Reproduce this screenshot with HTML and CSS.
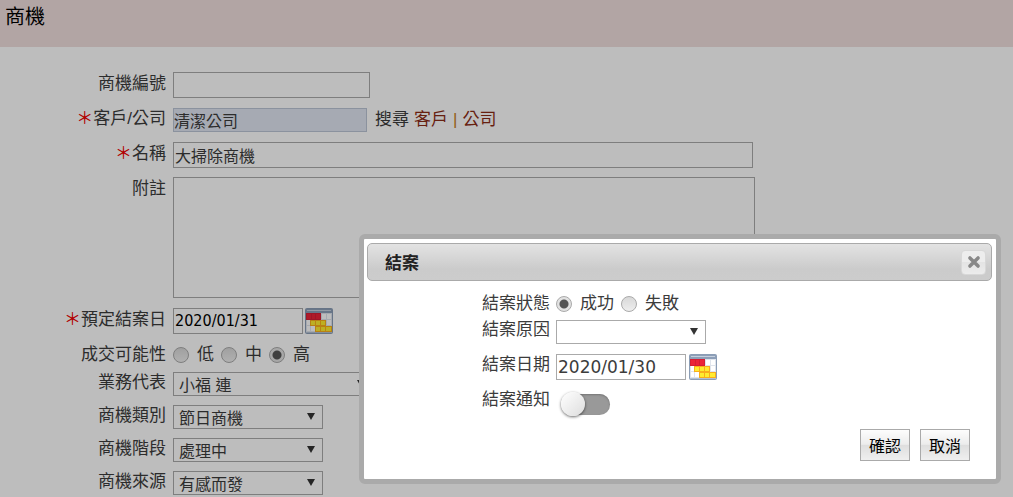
FILE: index.html
```html
<!DOCTYPE html>
<html lang="zh-Hant">
<head>
    <meta charset="UTF-8">
    <meta name="viewport" content="width=device-width, initial-scale=1.0">
    <title>商機</title>
    <link rel="stylesheet" href="styles.css">
</head>
<body>

    <!-- Calendar icon shared by the date fields -->
    <svg class="defs" width="0" height="0" aria-hidden="true">
        <symbol id="calendar" viewBox="0 0 28 26">
            <rect x="0.5" y="0.5" width="27" height="25" rx="1" fill="#b4c2d3" stroke="#8b9db5"/>
            <rect x="1" y="1" width="26" height="4" fill="#8d9fb8"/>
            <rect x="2" y="2" width="24" height="1" fill="#c5d0de"/>
            <rect x="1" y="5" width="26" height="19" fill="#dfe4ec"/>
            <path fill="#fff" d="M17 6h4v5h-4zM22 6h4v5h-4zM2 12h3v5H2zM22 12h4v5h-4zM2 18h3v5H2zM6 18h4v5H6z"/>
            <path fill="#d51f35" d="M1 5h15v7H1z"/>
            <path fill="#ec2438" d="M2 6h4v5H2zM7 6h3v5H7zM11 6h4v5h-4z"/>
            <path fill="#f9ae1c" d="M5 12h16v6h6v6H10v-6H5z"/>
            <path fill="#ffec30" d="M6 13h4v4H6zM11 13h4v4h-4zM16 13h4v4h-4zM11 19h4v4h-4zM16 19h4v4h-4zM21 19h5v4h-5z"/>
        </symbol>
    </svg>

    <header class="page-header">
        <h1>商機</h1>
    </header>

    <!-- Opportunity form -->
    <form class="form">
        <div class="field">
            <label class="field-label" for="oppNo">商機編號</label>
            <input class="text-box no-box" type="text" id="oppNo">
        </div>
        <div class="field">
            <label class="field-label" for="client"><span class="required">＊</span>客戶/公司</label>
            <input class="text-box client-box" type="text" id="client" value="清潔公司" readonly>
            <div class="search">搜尋 <a href="#">客戶</a> <span class="bar">|</span> <a href="#">公司</a></div>
        </div>
        <div class="field">
            <label class="field-label" for="name"><span class="required">＊</span>名稱</label>
            <input class="text-box name-box" type="text" id="name" value="大掃除商機">
        </div>
        <div class="field field-note">
            <label class="field-label" for="note">附註</label>
            <textarea class="note-box" id="note"></textarea>
        </div>
        <div class="field">
            <label class="field-label" for="dueDate"><span class="required">＊</span>預定結案日</label>
            <input class="text-box date-box" type="text" id="dueDate" value="2020/01/31">
            <button class="calendar-btn" type="button" aria-label="選擇日期"><svg><use href="#calendar"/></svg></button>
        </div>
        <div class="field field-radio" role="radiogroup" aria-labelledby="chanceLabel">
            <span class="field-label" id="chanceLabel">成交可能性</span>
            <div class="radios">
                <label><input type="radio" name="chance">低</label>
                <label><input type="radio" name="chance">中</label>
                <label><input type="radio" name="chance" checked>高</label>
            </div>
        </div>
        <div class="field field-select">
            <label class="field-label" for="sales">業務代表</label>
            <div class="select wide"><select id="sales"><option>小福 連</option></select></div>
        </div>
        <div class="field field-select">
            <label class="field-label" for="category">商機類別</label>
            <div class="select"><select id="category"><option>節日商機</option></select></div>
        </div>
        <div class="field field-select">
            <label class="field-label" for="stage">商機階段</label>
            <div class="select"><select id="stage"><option>處理中</option></select></div>
        </div>
        <div class="field field-select">
            <label class="field-label" for="source">商機來源</label>
            <div class="select"><select id="source"><option>有感而發</option></select></div>
        </div>
    </form>

    <div class="overlay"></div>

    <!-- Close-case dialog -->
    <div class="dialog" role="dialog" aria-labelledby="dialogTitle">
        <div class="dialog-title">
            <h2 id="dialogTitle">結案</h2>
            <button class="close-btn" type="button" aria-label="關閉">
                <svg viewBox="0 0 12 12"><path d="M2.5 2.5l7 7M9.5 2.5l-7 7"/></svg>
            </button>
        </div>
        <form class="dialog-form">
            <div class="field field-status" role="radiogroup" aria-labelledby="statusLabel">
                <span class="field-label" id="statusLabel">結案狀態</span>
                <div class="radios">
                    <label><input type="radio" name="status" checked>成功</label>
                    <label><input type="radio" name="status">失敗</label>
                </div>
            </div>
            <div class="field">
                <label class="field-label" for="reason">結案原因</label>
                <div class="select"><select id="reason"><option></option></select></div>
            </div>
            <div class="field">
                <label class="field-label" for="closeDate">結案日期</label>
                <input class="text-box date-box" type="text" id="closeDate" value="2020/01/30">
                <button class="calendar-btn" type="button" aria-label="選擇日期"><svg><use href="#calendar"/></svg></button>
            </div>
            <div class="field">
                <label class="field-label" for="notify">結案通知</label>
                <input class="toggle" type="checkbox" id="notify">
            </div>
            <div class="dialog-buttons">
                <button class="btn" type="submit">確認</button>
                <button class="btn" type="button">取消</button>
            </div>
        </form>
    </div>

</body>
</html>
```

FILE: styles.css
```css
* {
    box-sizing: border-box;
}

body {
    margin: 0;
    height: 100vh;
    overflow: hidden;
    background-color: #fff;
    color: #3c3c3c;
    font-family: "Liberation Sans", "Noto Sans CJK TC", sans-serif;
    font-size: 17px;
    line-height: 24px;
}

.defs {
    position: absolute;
}

input, select, textarea, button {
    margin: 0;
    font-family: inherit;
    color: inherit;
}

.page-header {
    height: 47px;
    padding: 5px;
    background-color: #f0dfde;
}

h1 {
    margin: 0;
    color: #000;
    font-size: 20px;
    font-weight: normal;
    line-height: 24px;
}

/* Form rows */
.form {
    padding-top: 24px;
}

.field {
    display: flex;
    align-items: flex-start;
    min-height: 35px;
}

.field-label {
    flex: none;
    width: 166px;
    margin-right: 7px;
    padding-top: 1px;
    text-align: right;
    white-space: nowrap;
}

.required {
    color: #f00000;
}

.field-note {
    min-height: 131px;
}

.field-radio {
    min-height: 28px;
}

.field-select {
    min-height: 33px;
}

.field-radio, .field-status, .field-select {
    line-height: 24px;
}

.text-box, .note-box, .select select {
    border: 1px solid #aaa;
    border-radius: 0;
    background-color: #fff;
    font-size: 16px;
}

.text-box {
    height: 26px;
    margin-top: 1px;
    padding: 0 1px 1px;
}

.no-box {
    width: 197px;
}

.client-box {
    width: 194px;
    height: 24px;
    margin-top: 2px;
    padding: 0;
    border-color: #bcc5d6;
    background-color: #e0e6f2;
}

.name-box {
    width: 580px;
}

.note-box {
    width: 582px;
    height: 121px;
    margin-top: 1px;
    resize: none;
}

.date-box {
    width: 130px;
    color: #000;
    font-family: "DejaVu Sans Condensed", "Noto Sans", sans-serif;
}

.search {
    display: flex;
    gap: 5px;
    margin-left: 8px;
    padding-top: 2px;
}

.search a {
    color: #8c2c16;
    text-decoration: none;
}

.bar {
    color: #c87f1e;
}

.calendar-btn {
    width: 28px;
    height: 26px;
    margin: 1px 0 0 2px;
    padding: 0;
    border: 0;
    background: none;
}

.calendar-btn svg {
    display: block;
    width: 28px;
    height: 26px;
}

/* Radios */
.radios {
    display: flex;
    gap: 7px;
    padding-top: 1px;
}

.radios label {
    display: flex;
    align-items: center;
    gap: 8px;
}

.radios input {
    appearance: none;
    width: 16px;
    height: 16px;
    border: 1px solid #aaa;
    border-radius: 50%;
    background: linear-gradient(#d8d8d8, #eee);
}

.radios input:checked {
    background: radial-gradient(circle, #555 0 4px, #e2e2e2 5px);
}

/* Drop-downs */
.select {
    position: relative;
    width: 150px;
    margin-top: 2px;
}

.select.wide {
    width: 200px;
}

.select select {
    appearance: none;
    display: block;
    width: 100%;
    height: 24px;
    padding: 3px 5px 0;
    line-height: 19px;
}

.select::after {
    content: "";
    position: absolute;
    top: 8px;
    right: 8px;
    border: 4px solid transparent;
    border-top: 7px solid #333;
    border-bottom: 0;
    pointer-events: none;
}

/* Dialog */
.overlay {
    position: fixed;
    inset: 0;
    background-color: rgba(0, 0, 0, 0.26);
}

.dialog {
    position: absolute;
    top: 234px;
    right: 12px;
    width: 642px;
    max-width: 96%;
    padding: 4px 4px 18px 3px;
    border: 5px solid #aaa;
    border-radius: 6px;
    background-color: #fff;
}

.dialog-title {
    display: flex;
    align-items: center;
    justify-content: space-between;
    height: 38px;
    padding: 0 5px 0 17px;
    border: 1px solid #aaa;
    border-radius: 5px;
    background: linear-gradient(#e3e3e3, #cbcbcb 70%, #ccc);
}

h2 {
    margin: 0;
    padding-top: 3px;
    color: #222;
    font-size: 17px;
}

.close-btn {
    display: flex;
    align-items: center;
    justify-content: center;
    width: 25px;
    height: 25px;
    padding: 0;
    border: 1px solid #d8d8d8;
    border-radius: 4px;
    background: linear-gradient(#ededed 50%, #e4e4e4 50%, #ececec);
}

.close-btn svg {
    width: 14px;
    height: 14px;
    fill: none;
    stroke: #888;
    stroke-width: 3;
    stroke-linecap: round;
}

.dialog-form {
    padding-top: 10px;
}

.dialog-form .field-label {
    width: 183px;
    margin-right: 6px;
}

.dialog-form .field-status {
    min-height: 26px;
}

.dialog-form .select {
    margin-top: 3px;
}

.dialog-form .date-box {
    margin-top: 2px;
    color: #3c3c3c;
    font-family: "DejaVu Sans", sans-serif;
    font-size: 17px;
}

.dialog-form .calendar-btn {
    margin: 2px 0 0 3px;
}

.toggle {
    position: relative;
    appearance: none;
    width: 46px;
    height: 21px;
    margin: 7px 0 0 8px;
    border-radius: 11px;
    background-color: #999;
    box-shadow: inset 0 1px 2px #777;
}

.toggle::before {
    content: "";
    position: absolute;
    top: -2px;
    left: -3px;
    width: 24px;
    height: 24px;
    border-radius: 50%;
    background: linear-gradient(135deg, #fff, #ddd);
    box-shadow: 0 1px 3px rgba(0, 0, 0, 0.6);
}

.toggle:checked::before {
    left: 25px;
}

.dialog-buttons {
    display: flex;
    justify-content: flex-end;
    gap: 10px;
    padding: 7px 22px 0 0;
}

.btn {
    height: 32px;
    padding: 0 8px;
    border: 1px solid #aaa;
    background: linear-gradient(#fdfdfd, #ececec 48%, #dedede 50%, #efefef);
    color: #000;
    font-size: 16px;
}
```
